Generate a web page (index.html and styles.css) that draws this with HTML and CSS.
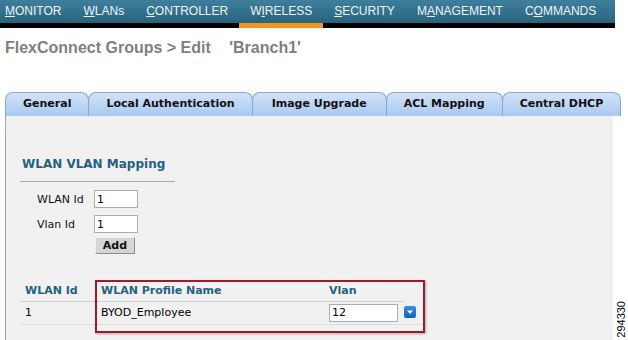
FILE: index.html
```html
<!DOCTYPE html>
<html lang="en">
<head>
    <meta charset="UTF-8">
    <title>FlexConnect Groups - Edit</title>
    <link rel="stylesheet" href="styles.css">
</head>
<body>
    <div class="topnav">
        <a href="#" class="first"><u>M</u>ONITOR</a>
        <a href="#"><u>W</u>LANs</a>
        <a href="#"><u>C</u>ONTROLLER</a>
        <a href="#" class="active">W<u>I</u>RELESS</a>
        <a href="#"><u>S</u>ECURITY</a>
        <a href="#">M<u>A</u>NAGEMENT</a>
        <a href="#">C<u>O</u>MMANDS</a>
        <span class="fill"></span>
    </div>

    <h1 class="page-title">FlexConnect Groups &gt; Edit <span class="group-name">'Branch1'</span></h1>

    <div class="tabs">
        <div class="tab">General</div>
        <div class="tab">Local Authentication</div>
        <div class="tab">Image Upgrade</div>
        <div class="tab">ACL Mapping</div>
        <div class="tab">Central DHCP</div>
    </div>

    <div class="panel">
        <h2 class="section-title">WLAN VLAN Mapping</h2>

        <div class="map-form">
            <label for="wlanId">WLAN Id</label>
            <input id="wlanId" type="text" value="1">
            <label for="vlanId">Vlan Id</label>
            <input id="vlanId" type="text" value="1">
            <span></span>
            <button class="add-btn">Add</button>
        </div>

        <div class="map-table-wrap">
            <table class="map-table">
                <tr>
                    <th class="col-id">WLAN Id</th>
                    <th class="col-name">WLAN Profile Name</th>
                    <th class="col-vlan">Vlan</th>
                    <th class="col-menu"></th>
                </tr>
                <tr>
                    <td class="col-id">1</td>
                    <td class="col-name">BYOD_Employee</td>
                    <td class="col-vlan"><input class="vlan-input" type="text" value="12"></td>
                    <td class="col-menu">
                        <svg class="menu-icon" width="12" height="12" viewBox="0 0 12 12">
                            <defs>
                                <linearGradient id="blueBtn" x1="0" y1="0" x2="0" y2="1">
                                    <stop offset="0" stop-color="#3d8ee0"/>
                                    <stop offset="1" stop-color="#1461b8"/>
                                </linearGradient>
                            </defs>
                            <rect x="0" y="0" width="12" height="12" rx="2" fill="url(#blueBtn)"/>
                            <path d="M3 4.5 L9 4.5 L6 8 Z" fill="#fff"/>
                        </svg>
                    </td>
                </tr>
            </table>
            <div class="highlight"></div>
        </div>
    </div>

    <div class="figure-id">294330</div>
</body>
</html>
```

FILE: styles.css
```css
* {
    box-sizing: border-box;
}

body {
    margin: 0;
    width: 628px;
    height: 340px;
    overflow: hidden;
    position: relative;
    background: #ffffff;
    font-family: "DejaVu Sans", Verdana, sans-serif;
    font-size: 11px;
    color: #000;
}

/* top menu bar */
.topnav {
    display: flex;
    width: 615px;
    background: linear-gradient(#3f7f9b, #235d78);
    font-family: "Liberation Sans", Arial, sans-serif;
    font-size: 12px;
}

.topnav a {
    color: #eef4f7;
    text-decoration: none;
    line-height: 23px;
    padding: 0 11px;
    border-bottom: 5px solid #000;
}

.topnav a.first {
    padding-left: 5px;
}

.topnav a.active {
    border-bottom-color: #f7941d;
}

.topnav .fill {
    flex: 1;
    border-bottom: 5px solid #000;
}

.page-title {
    margin: 9px 0 0 5px;
    font-family: "Liberation Sans", Arial, sans-serif;
    font-size: 16px;
    line-height: 21px;
    font-weight: bold;
    color: #7f7f7f;
}

.page-title .group-name {
    margin-left: 14px;
}

/* tab strip */
.tabs {
    display: flex;
    margin: 34px 0 0 5px;
    width: 608px;
}

.tab {
    height: 24px;
    line-height: 22px;
    padding: 0 17px;
    margin-right: -1px;
    background: linear-gradient(#d3e3f8, #a9c8ef);
    border: 1px solid #86a7d3;
    border-bottom: none;
    border-radius: 8px 8px 0 0;
    font-weight: bold;
    color: #111;
    white-space: nowrap;
}

.tab:nth-child(3) {
    padding: 0 19px;
}

.tab:last-child {
    flex: 1;
    text-align: center;
}

.panel {
    margin-left: 5px;
    width: 608px;
    height: 224px;
    padding: 0 0 0 14px;
    background: #f1f1f1;
    border-left: 1px solid #a3a3a3;
}

.section-title {
    width: 155px;
    margin: 0;
    padding: 41px 0 9px 2px;
    font-size: 12px;
    line-height: 15px;
    font-weight: bold;
    color: #23617f;
    border-bottom: 1px solid #a8a8a8;
}

.map-form {
    display: grid;
    grid-template-columns: 57px 44px;
    row-gap: 7px;
    align-items: center;
    margin: 8px 0 0 17px;
}

.map-form label {
    color: #111;
}

.map-form input,
.vlan-input {
    height: 18px;
    padding: 0 2px;
    border: 1px solid #a5acb2;
    background: #fff;
    font-family: "DejaVu Sans", Verdana, sans-serif;
    font-size: 11px;
    color: #000;
}

.map-form input {
    width: 44px;
}

.add-btn {
    width: 40px;
    height: 17px;
    margin: -3px 0 0 1px;
    padding: 0;
    background: #d5d5d5;
    border: 1px solid;
    border-color: #f2f2f2 #8c8c8c #8c8c8c #f2f2f2;
    font-family: "DejaVu Sans", Verdana, sans-serif;
    font-size: 11px;
    font-weight: bold;
    color: #111;
}

/* mapping table */
.map-table-wrap {
    position: relative;
    margin-top: 26px;
    width: 420px;
}

.map-table {
    border-collapse: collapse;
}

.map-table th,
.map-table td {
    padding: 0;
    text-align: left;
}

.map-table th {
    height: 21px;
    font-weight: bold;
    color: #23617f;
    border-bottom: 1px solid #cfcfcf;
}

.map-table td {
    height: 23px;
    border-bottom: 1px solid #dedede;
}

.map-table th.col-menu {
    border-bottom: none;
}

.col-id {
    width: 76px;
    padding-left: 5px !important;
}

.col-name {
    width: 229px;
    padding-left: 5px !important;
}

.col-vlan {
    width: 79px;
    padding-left: 4px !important;
}

.col-menu {
    width: 17px;
}

.vlan-input {
    width: 69px;
    display: block;
}

.menu-icon {
    display: block;
}

/* red callout box drawn over the table */
.highlight {
    position: absolute;
    left: 75px;
    top: 0;
    width: 330px;
    height: 53px;
    border: 2px solid #a3182a;
    box-shadow: 1px 1px 2px rgba(0, 0, 0, 0.3);
}

.figure-id {
    position: absolute;
    left: 615px;
    top: 301px;
    writing-mode: vertical-rl;
    transform: rotate(180deg);
    font-family: "Liberation Sans", Arial, sans-serif;
    font-size: 11px;
    line-height: 12px;
    color: #000;
}
```
